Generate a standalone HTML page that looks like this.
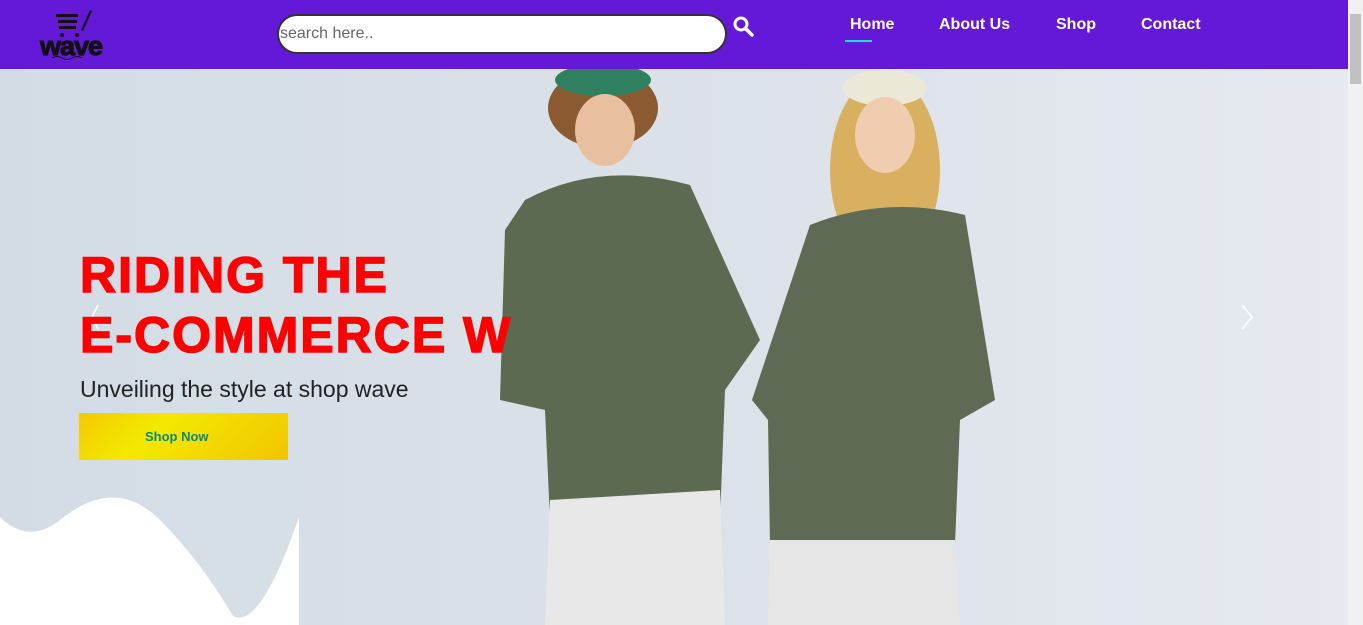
<!DOCTYPE html>
<html><head><meta charset="utf-8"><style>
*{margin:0;padding:0;box-sizing:border-box}
body{width:1363px;height:625px;overflow:hidden;font-family:"Liberation Sans",sans-serif;background:#fff;position:relative}
.nav{position:absolute;left:0;top:0;width:1348px;height:69px;background:#6418d8}
.search{position:absolute;left:277px;top:14px;width:450px;height:40px;border:2px solid #333;border-radius:20px;background:#fff;font-size:16px;color:#666;padding:9px 0 0 1px}
.links a{position:absolute;top:16px;color:#fff;font-weight:bold;font-size:16px;text-decoration:none}
.hero{position:absolute;left:0;top:69px;width:1348px;height:556px;background:linear-gradient(90deg,#d3dce5 0%,#dbe1e9 50%,#e6e9f0 100%);overflow:hidden}
h1{position:absolute;left:80px;top:245px;font-family:"Liberation Sans",sans-serif;font-weight:900;color:#ff0000;font-size:50px;line-height:60px;letter-spacing:2px;white-space:nowrap;-webkit-text-stroke:1.5px #ff0000}
.sub{position:absolute;left:80px;top:376px;font-size:23px;color:#222}
.btn{position:absolute;left:79px;top:413px;width:209px;height:47px;background:linear-gradient(135deg,#f5c800 0%,#f3ea00 35%,#f2c500 100%);color:#0a8a7a;font-weight:bold;font-size:13px;padding-left:66px;line-height:47px}
.sb{position:absolute;right:0;top:0;width:15px;height:625px;background:#f1f1f1}
</style></head><body>
<div class="nav">
<svg style="position:absolute;left:38px;top:8px" width="74" height="52" viewBox="0 0 74 52">
<g fill="#111"><rect x="18" y="6" width="22" height="3"/><rect x="20" y="12" width="19" height="3"/><rect x="21" y="18" width="17" height="3"/><path d="M52 2 L54 3 L45 23 L43 22Z"/><circle cx="24" cy="27" r="2"/><circle cx="39" cy="27" r="2"/></g>
<text x="2" y="47" font-family="Liberation Sans" font-weight="900" font-size="27" fill="#111" letter-spacing="-1" stroke="#111" stroke-width="1">wave</text>
<path d="M14 50 q5 -3 10 0 q5 3 10 0 q5 -3 10 0" stroke="#111" fill="none"/>
</svg>
<div class="search">search here..</div>
<svg style="position:absolute;left:733px;top:16px" width="22" height="22" viewBox="0 0 22 22"><circle cx="8" cy="8" r="6" stroke="#fff" stroke-width="3" fill="none"/><path d="M12.5 12.5 L19 19" stroke="#fff" stroke-width="3.5" stroke-linecap="round"/></svg>
<div class="links"><a style="left:850px">Home</a><a style="left:939px">About Us</a><a style="left:1056px">Shop</a><a style="left:1141px">Contact</a></div>
<div style="position:absolute;left:845px;top:40px;width:27px;height:2px;background:#1ee0d0"></div>
</div>
<div class="hero">
<svg style="position:absolute;left:0;top:0" width="1348" height="556" viewBox="0 69 1348 556">
<path d="M0 517 Q28 545 60 520 Q115 475 160 520 Q200 560 233 616 Q260 630 299 517 L299 625 L0 625Z" fill="#fff"/>
<ellipse cx="603" cy="108" rx="55" ry="40" fill="#8a5a30"/>
<ellipse cx="603" cy="80" rx="48" ry="16" fill="#2e8060"/>
<ellipse cx="605" cy="130" rx="30" ry="36" fill="#e8c0a0"/>
<path d="M525 200 Q600 160 690 185 L760 340 L725 390 L720 520 L550 520 L545 410 L500 400 L505 230Z" fill="#5c6a52"/>
<path d="M550 500 L720 490 L725 625 L545 625Z" fill="#e8e8e8"/>
<ellipse cx="885" cy="170" rx="55" ry="95" fill="#d8b060"/>
<ellipse cx="885" cy="88" rx="42" ry="18" fill="#ece8d8"/>
<ellipse cx="885" cy="135" rx="30" ry="38" fill="#f0cdb0"/>
<path d="M810 225 Q885 195 965 215 L995 400 L960 420 L955 545 L770 545 L768 420 L752 400Z" fill="#5e6a54"/>
<path d="M770 540 L955 540 L960 625 L768 625Z" fill="#e6e6e6"/>
<path d="M98 305 L92 317 L98 329 M1242 305 L1252 317 L1242 329" stroke="#fff" stroke-width="1.5" fill="none"/>
</svg>
</div>
<h1>RIDING THE<br>E-COMMERCE W</h1>
<div class="sub">Unveiling the style at shop wave</div>
<div class="btn">Shop Now</div>
<div class="sb"><div style="position:absolute;left:2px;top:14px;width:11px;height:70px;background:#c1c1c1"></div></div>
</body></html>
